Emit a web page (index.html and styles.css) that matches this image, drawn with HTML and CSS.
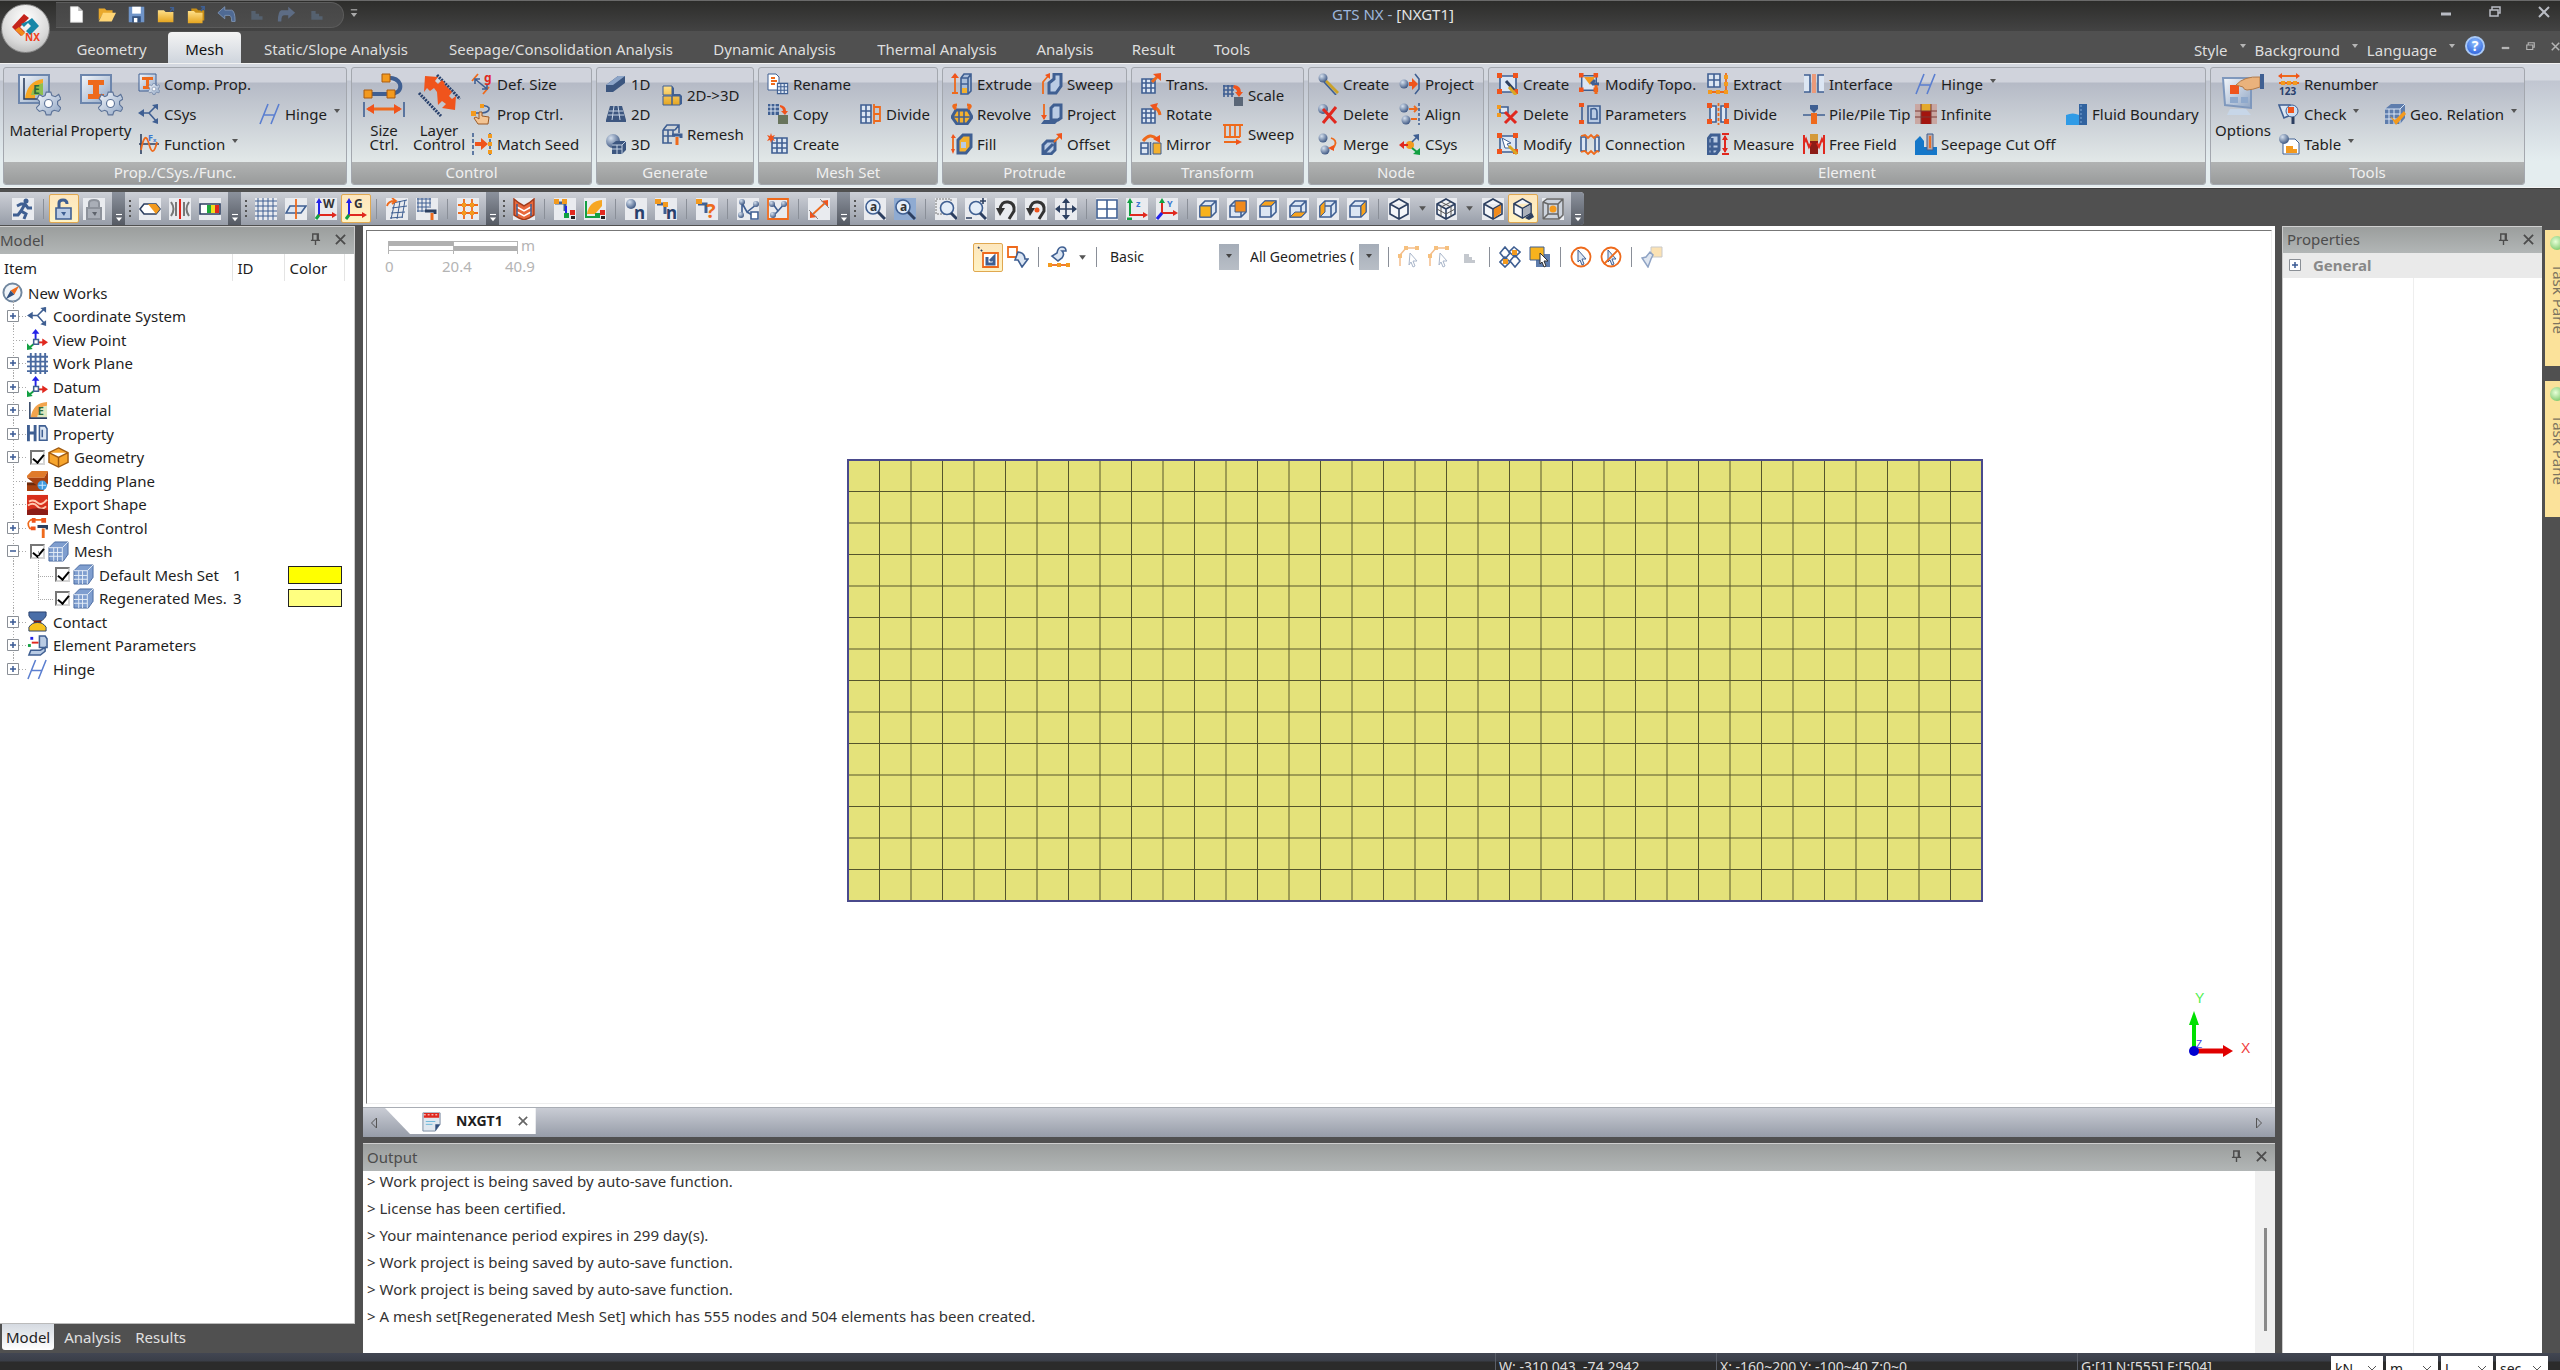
FILE: index.html
```html
<!DOCTYPE html>
<html lang="en">
<head>
<meta charset="utf-8">
<title>GTS NX - [NXGT1]</title>
<link rel="stylesheet" href="styles.css">
</head>
<body>
<svg class="sprite" aria-hidden="true">
<defs>
<linearGradient id="steel" x1="0" y1="0" x2="1" y2="1"><stop offset="0" stop-color="#f4f7fb"/><stop offset="1" stop-color="#8fa5c4"/></linearGradient>
<linearGradient id="amber" x1="0" y1="0" x2="0" y2="1"><stop offset="0" stop-color="#ffe08a"/><stop offset="1" stop-color="#e5a520"/></linearGradient>
<radialGradient id="ball" cx=".35" cy=".3" r=".8"><stop offset="0" stop-color="#d5e0ee"/><stop offset="1" stop-color="#2f4a78"/></radialGradient>
</defs>
<!-- quick access -->
<symbol id="new" viewBox="0 0 22 22"><path fill="#fff" stroke="#ccc" d="M4 2h9l5 5v13H4z"/><path fill="#bbb" d="M13 2v5h5z"/></symbol>
<symbol id="open" viewBox="0 0 22 22"><path fill="#e9a92c" d="M2 4h7l2 2h7v4H7L2 18z"/><path fill="#ffd676" d="M7 9h15l-5 10H2z"/></symbol>
<symbol id="save" viewBox="0 0 22 22"><path fill="#6f94c8" d="M2 2h18v18H2z"/><path fill="#fff" d="M6 2h10v8H6z"/><path fill="#34527e" d="M6 13h10v7H6z"/><path fill="#fff" d="M8 15h4v5H8z"/></symbol>
<symbol id="folder" viewBox="0 0 22 22"><path fill="url(#amber)" d="M1 6h7l2 2h9v12H1z"/><path class="s" d="M15 8l4-5m-4 0h4v4"/></symbol>
<symbol id="folders" viewBox="0 0 22 22"><path fill="#c98f17" d="M5 4h6l2 2h7v12H5z"/><path fill="url(#amber)" d="M1 7h7l2 2h8v12H1z"/><path class="s" d="M16 7l4-5m-4 0h4v4"/></symbol>
<symbol id="undo" viewBox="0 0 22 22"><path fill="#4f6a94" stroke="#8097b8" d="M1 9l8-7v4h8q4 1 4 13h-4q0-7-3-7H9v4z"/></symbol>
<symbol id="redo" viewBox="0 0 22 22"><path fill="#5d6c84" d="M21 9l-8-7v4H5q-4 1-4 13h4q0-7 3-7h5v4z"/></symbol>
<symbol id="dim" viewBox="0 0 22 22"><path fill="#55616f" d="M5 7h5v3h4v3h4v4H5z"/></symbol>
<!-- large ribbon art -->
<symbol id="gear" viewBox="0 0 22 22"><path fill="url(#steel)" stroke="#5d7398" d="M9 1h4l1 3 3 1 3-2 2 4-3 2v3l3 3-2 3-4-1-2 1-1 3h-4l-1-3-2-1-3 1-3-3 3-3V9L1 7l2-4 3 2 2-1z"/><circle cx="11" cy="11" r="3.500" fill="#fff" stroke="#5d7398"/></symbol>
<symbol id="material" viewBox="0 0 44 44"><path fill="url(#steel)" stroke="#6d86ad" stroke-width="2" d="M2 2h30v28H2z"/><path fill="#f6a623" d="M8 26q2-18 18-20v4q-8 2-8 16z"/><path fill="#8fbf4e" d="M14 22q2-10 12-12v12z"/><path class="k" d="M7 5v21h19"/><text class="gt" x="16" y="21">E</text><use href="#gear" x="19" y="18" width="25" height="25"/></symbol>
<symbol id="property" viewBox="0 0 44 44"><path fill="url(#steel)" stroke="#6d86ad" stroke-width="2" d="M2 2h30v28H2z"/><path fill="#ee6a1c" d="M9 7h16v5h-5v9h5v5H9v-5h5v-9H9z"/><use href="#gear" x="19" y="18" width="25" height="25"/></symbol>
<symbol id="sizectrl" viewBox="0 0 44 44"><path class="s w4" d="M6 21h24q10-2 8-10-3-7-14-6"/><path class="fo" stroke="#a85a10" d="M2 17h8v8H2zM25 17h8v8h-8zM20 1h8v8h-8z"/><path class="s" d="M2 29v15M42 29v15"/><path class="o w3" d="M6 36h32"/><path class="fr" d="M4 36l8-5v10zM40 36l-8-5v10z"/></symbol>
<symbol id="layer" viewBox="0 0 44 44"><path stroke="#28406c" stroke-width="3" stroke-dasharray="2 1" d="M2 20l22 23M20 2l23 24"/><path class="fr" d="M8 3l13 1-3 4 3 3 4-4 0 0 3 3-1 1 8 8-3 4 3 3 4-3-1 14-13-2 4-4-4-3-4 4-1-13-3-4-4 3-3-3-3 4z"/></symbol>
<symbol id="options" viewBox="0 0 44 44"><path fill="url(#steel)" stroke="#7f98bd" stroke-width="2" d="M2 5h28v30L4 32z"/><path fill="#c7d6e8" d="M9 36h16l5 6H6z"/><path class="fr" d="M9 12h9v9H9z"/><path fill="#8fa9cc" d="M9 24h8v6H9zM20 24h7v6h-7z"/><path fill="#eab27c" stroke="#b37a48" d="M15 12q8-9 24-8v10q-8 3-13 3-3 0-4-3z"/><path class="fs" d="M39 1h4v15h-4z"/></symbol>
<!-- small ribbon art -->
<symbol id="compprop" viewBox="0 0 22 22"><path fill="url(#steel)" class="s1" d="M1 1h17v17H1z"/><path fill="#ee6a1c" d="M4 4h11v3h-4v6h3v3H5v-3h3V7H4z"/><use href="#gear" x="10" y="10" width="12" height="12"/></symbol>
<symbol id="csys" viewBox="0 0 22 22"><path class="s" d="M2 10h9l8-8M11 10l8 9"/><path class="fs" d="M0 10l6-4v8zM20 1v6l-6-5zM20 21v-6l-6 4z"/></symbol>
<symbol id="func" viewBox="0 0 22 22"><path class="k" d="M3 1v20M1 11h20"/><path class="o" d="M3 17Q7-4 11 11t8-2"/><text class="bt" x="10" y="8">Fₓ</text></symbol>
<symbol id="hinge" viewBox="0 0 22 22"><path stroke="#5b7fd0" stroke-width="1.600" fill="none" d="M1 21L9 1M12 21l8-20M5 12h11"/></symbol>
<symbol id="defsize" viewBox="0 0 22 22"><path class="o" d="M1 8l6-7M12 21l6-7"/><path class="s" d="M4 6l12 10M4 11V6h5M11 16h5v-5"/><text class="rt" x="13" y="9">g</text></symbol>
<symbol id="propctrl" viewBox="0 0 22 22"><path class="s" d="M3 10h8q8-1 7-5-2-3-7-2"/><path class="fo" d="M0 8h5v5H0zM9 1h4v4H9z"/><path fill="#f3c493" stroke="#9a5a26" d="M7 21l-4-6 2-1 3 2V9h3v4l7 1-1 7z"/></symbol>
<symbol id="seed" viewBox="0 0 22 22"><path class="s" stroke-dasharray="4 2" d="M2 0v22M19 0v22"/><path class="fr" d="M4 9h6V5l7 6-7 6v-4H4z"/><path class="fo" d="M17 1h4v4h-4zM17 9h4v4h-4zM17 17h4v4h-4z"/></symbol>
<symbol id="d1" viewBox="0 0 22 22"><path fill="#3c567f" d="M1 12L13 3h7v7L8 19H1z"/><path fill="#8da5c8" d="M1 12L13 3h7L8 12z"/></symbol>
<symbol id="d2" viewBox="0 0 22 22"><path fill="#3c567f" d="M5 3h12l4 14v2H1v-2z"/><path stroke="#c5d2e4" fill="none" d="M4 8h14M3 12h16M9 3L7 17M13 3l2 14"/></symbol>
<symbol id="d3" viewBox="0 0 22 22"><circle cx="8" cy="8" r="7" fill="url(#ball)"/><path fill="#3c567f" d="M7 11l4-3h10v9l-4 4H7z"/><path stroke="#c5d2e4" fill="none" d="M7 12h10v9M17 12l4-4M12 12v9M7 16h10"/></symbol>
<symbol id="to3d" viewBox="0 0 22 22"><path class="s1" fill="url(#amber)" d="M2 2h9v9H2zM2 12h9v9H2zM11 12h8v9h-8z"/><path class="fs" d="M11 2l2 2v6h6l2 2v8l-2 1v-9h-8z"/></symbol>
<symbol id="remesh" viewBox="0 0 22 22"><path class="s" d="M2 7l4-5h12v8M2 7h12M2 7v13h9M7 7v13M2 13h12M12 7v6M14 7l4-5"/><path class="s w3" d="M11 12h9v3"/><path class="o w3" d="M16 14v8"/></symbol>
<symbol id="grid" viewBox="0 0 22 22"><path class="s" fill="#dce6f3" d="M5 5h15v15H5zM10 5v15M15 5v15M5 10h15M5 15h15"/></symbol>
<symbol id="rename" viewBox="0 0 22 22"><path fill="#fff" class="s1" d="M1 1h8l3 3v13H1z"/><path class="o" d="M4 5h4M4 8h6M4 11h4"/><use href="#grid" x="7" y="7" width="15" height="15"/></symbol>
<symbol id="copy" viewBox="0 0 22 22"><path class="fs" d="M1 1h11v11H1z"/><path stroke="#dbe4f0" d="M4 1v11M8 1v11M1 4h11M1 8h11"/><path fill="#68745c" d="M11 12h10v9H11z"/><path class="fr" d="M13 2q6 1 6 6h2l-3 4-4-4h2q0-3-3-4z"/></symbol>
<symbol id="create" viewBox="0 0 22 22"><use href="#grid" width="22" height="22"/><path class="fr" d="M4 0l1 3 3-1-2 3 2 3-3-1-1 3-1-3-3 1 2-3-2-3 3 1z"/></symbol>
<symbol id="divide" viewBox="0 0 22 22"><path class="s" fill="#dce6f3" d="M1 2h10v18H1zM6 2v18M1 8h10M1 14h10"/><path class="o" d="M14 1v20M14 4h6v14h-6M14 11h6"/></symbol>
<symbol id="cube" viewBox="0 0 22 22"><path class="s" fill="#dce6f3" d="M3 8l5-5h11v11l-5 5H3zM3 8h11v11M14 8l5-5"/></symbol>
<symbol id="extrude" viewBox="0 0 22 22"><path class="o" d="M4 2v18M1 20h6"/><path class="fr" d="M4 0l4 5H0z"/><path class="s" fill="#a9bdd9" d="M10 5l3-4h7v17l-3 3h-7zM10 5h7v16M17 5l3-4M10 11h7"/><path fill="#f3b02e" d="M11 15h5v5h-5z"/></symbol>
<symbol id="revolve" viewBox="0 0 22 22"><path class="s w3" fill="#f3b02e" d="M5 7h12l4 7-5 7H6l-5-7z"/><path class="s" d="M8 7v14M13 7v14M2 14h18"/><path class="o w3" d="M5 6q-5-4 1-4M17 6q5-4-1-4"/></symbol>
<symbol id="fill" viewBox="0 0 22 22"><path class="o" d="M2 3v15"/><path class="fr" d="M2 1l3 4H0zM2 21l-2-5h4z"/><path class="s w3" fill="#f3b02e" d="M7 7l5-5h8v12l-5 6H7z"/><path class="fl" d="M10 9h5v6h-5z"/></symbol>
<symbol id="sweepp" viewBox="0 0 22 22"><path class="s w3" fill="#b9cbe4" d="M8 10l5-4V1h7v12l-5 7H8z"/><path class="o" d="M2 21V9l6-7"/><path class="fr" d="M9 0v6L4 2z"/></symbol>
<symbol id="projectp" viewBox="0 0 22 22"><path class="o" d="M3 1v15"/><path class="fr" d="M3 17l-3-5h6z"/><path class="s w3" fill="#b9cbe4" d="M10 5l3-3h7v13l-3 2h-7z"/><path class="fs" d="M3 17h15l-4 4H0z"/></symbol>
<symbol id="offset" viewBox="0 0 22 22"><path class="s w3" fill="#b9cbe4" d="M2 12l4-4h8v9l-4 4H2zM3 20l9-9"/><path class="o" d="M13 9l6-6"/><path class="fr" d="M21 0v7l-6-6z"/></symbol>
<symbol id="trans" viewBox="0 0 22 22"><path class="s" fill="#dce6f3" d="M2 6h13v14H2zM6 6v14M11 6v14M2 10h13M2 15h13"/><path class="o w3" d="M12 9l7-7"/><path class="fr" d="M21 0v8l-8-7z"/></symbol>
<symbol id="rotate" viewBox="0 0 22 22"><path class="s" fill="#dce6f3" d="M2 6h13v14H2zM6 6v14M11 6v14M2 10h13M2 15h13"/><path class="o w3" d="M14 4q5 2 6 8"/><path class="fr" d="M10 2l8-2-3 8z"/></symbol>
<symbol id="mirror" viewBox="0 0 22 22"><path class="s" fill="#dce6f3" d="M1 10h7v11H1zM1 15h7"/><path class="s1" fill="#f3b02e" d="M13 10h8v11h-8z"/><path class="s" d="M10.500 9v13"/><path class="o w3" d="M3 8q7-9 14-2"/><path class="fr" d="M20 2v8l-7-4z"/></symbol>
<symbol id="scale" viewBox="0 0 22 22"><path class="s" d="M1 2h11M1 6h11M1 10h11M2 1v12M6 1v12M10 1v12"/><path fill="#5a6677" d="M12 13h9v9h-9z"/><path class="fr" d="M12 1q7 1 7 7h2l-4 5-4-5h2q0-3-4-4z"/></symbol>
<symbol id="sweept" viewBox="0 0 22 22"><path class="o" d="M1 2h20M3 2v12M8 2v12M13 2v12M18 2v12M2 14h16M2 19h15"/><path class="fr" d="M20 19l-6-3v6z"/></symbol>
<symbol id="nodec" viewBox="0 0 22 22"><circle cx="6" cy="5" r="4.500" fill="url(#ball)"/><path stroke="#caa22a" stroke-width="3" d="M9 8l12 12"/><path class="s" d="M7 9l12 13"/></symbol>
<symbol id="noded" viewBox="0 0 22 22"><circle cx="6" cy="6" r="5" fill="url(#ball)"/><path class="r w3" d="M6 6l13 14M19 4L6 20"/></symbol>
<symbol id="nodem" viewBox="0 0 22 22"><circle cx="6" cy="5" r="4.500" fill="url(#ball)"/><circle cx="8" cy="17" r="4.500" fill="url(#ball)"/><path class="o" d="M14 5q6 2 4 7t-4 3"/><path class="fr" d="M11 15l6-3v6z"/></symbol>
<symbol id="nodep" viewBox="0 0 22 22"><circle cx="5" cy="11" r="4.500" fill="url(#ball)"/><path class="fr" d="M10 9h3V5l6 6-6 6v-4h-3z"/><path class="s" d="M16 1l4 5v10l-4 5"/></symbol>
<symbol id="nodea" viewBox="0 0 22 22"><circle cx="5" cy="5" r="4.500" fill="url(#ball)"/><circle cx="7" cy="17" r="4.500" fill="url(#ball)"/><path class="o" d="M10 6h8M12 16h6M15 3l3 3-3 3"/><path class="s" stroke-dasharray="3 2" d="M20 0v22"/></symbol>
<symbol id="nodes" viewBox="0 0 22 22"><circle cx="11" cy="12" r="4" class="fo"/><path class="r" d="M9 12H3"/><path fill="#e0281e" d="M0 12l5-4v8z"/><path class="s" d="M13 9l5-5"/><path class="fs" d="M20 1v7l-6-6z"/><path class="g" d="M13 15l5 4"/><path fill="#12a042" d="M21 22v-7l-7 6z"/></symbol>
<symbol id="quad" viewBox="0 0 22 22"><path class="s" fill="#dce6f3" d="M3 3h16v16H3z"/><path class="fr" d="M0 0h5v5H0zM16 0h5v5h-5zM0 16h5v5H0zM16 16h5v5h-5z"/></symbol>
<symbol id="ecreate" viewBox="0 0 22 22"><use href="#quad" width="22" height="22"/><path class="k w3" d="M9 8l8 9"/><path stroke="#d8a825" stroke-width="3" d="M12 14l7 8"/></symbol>
<symbol id="edelete" viewBox="0 0 22 22"><path class="s" fill="#dce6f3" d="M3 4h8v6H3z"/><path class="fo" d="M0 2h4v4H0zM0 10h4v4H0z"/><path class="r w3" d="M8 9l11 11M20 8L8 20"/></symbol>
<symbol id="emodify" viewBox="0 0 22 22"><use href="#quad" width="22" height="22"/><path fill="#fff" class="s1" d="M5 5l9 5-4 1 3 4-5 0z"/><path stroke="#d8a825" stroke-width="3" d="M12 13l8 8"/></symbol>
<symbol id="topo" viewBox="0 0 22 22"><use href="#quad" width="20" height="20"/><path class="fo" d="M5 4h11l-5 8z"/><path class="s w3" d="M12 11l4-4M13 11h7"/><path class="o w3" d="M17 12v9"/></symbol>
<symbol id="param" viewBox="0 0 22 22"><path class="s" d="M3 2v17"/><path class="fr" d="M0 0h5v4H0zM0 17h5v4H0z"/><path class="s" fill="#b9cbe4" d="M9 3h12v17H9z"/><path class="s" d="M12 6q6-2 6 3v7h-6z"/></symbol>
<symbol id="conn" viewBox="0 0 22 22"><path class="s" fill="#dce6f3" d="M2 4h5v14H2zM16 4h4v14h-4z"/><path class="o" d="M2 3l4-1 3 3 3-3 3 3 3-3 2 1M2 19l4-1 3 3 3-3 3 3 3-3 2 1"/></symbol>
<symbol id="extract" viewBox="0 0 22 22"><path class="s" fill="#dce6f3" d="M1 1h12v13H1zM7 1v13M1 7h12"/><path class="o" d="M19 0v20M1 19h18"/><path class="fo" d="M17 2h4v4h-4zM17 9h4v4h-4zM1 17h4v4H1zM9 17h4v4H9zM17 17h4v4h-4z"/></symbol>
<symbol id="edivide" viewBox="0 0 22 22"><path class="s" fill="#dce6f3" d="M3 3h6v16H3zM14 3h5v16h-5z"/><path class="fr" d="M0 0h5v5H0zM17 0h5v5h-5zM0 16h5v5H0zM17 16h5v5h-5z"/><path class="o" stroke-dasharray="3 2" d="M11.500 0v22"/></symbol>
<symbol id="measure" viewBox="0 0 22 22"><path class="s w3" fill="#b9cbe4" d="M1 6l3-4h8v15l-3 4H1zM5 5v15M1 11h10M1 16h10"/><path class="r" d="M18 3v16M15 1h7M15 21h7"/><path fill="#e0281e" d="M18 2l3 5h-6zM18 20l3-5h-6z"/></symbol>
<symbol id="iface" viewBox="0 0 22 22"><path class="s" fill="#dce6f3" d="M1 2h6v17H1M21 2h-6v17h6"/><path fill="#eb9a7a" d="M9 1h4v19H9z"/></symbol>
<symbol id="pile" viewBox="0 0 22 22"><path class="fs" d="M7 2h8v4l-4 4-4-4z"/><path class="s" d="M0 12h22"/><path fill="#ee6a1c" d="M8 10h6v11H8z"/></symbol>
<symbol id="free" viewBox="0 0 22 22"><path fill="#8c1c16" d="M7 8h8v13H7z"/><path fill="#d49a3a" d="M7 1h8v7H7z"/><path class="r" d="M1 2v19M21 2v19M1 10l2-4 3 8 2-4M21 10l-2-4-3 8-2-4"/></symbol>
<symbol id="infinite" viewBox="0 0 22 22"><path fill="#c9a7a2" d="M0 1h22v20H0z"/><path fill="#e3a92d" d="M6 1h10v7H6z"/><path fill="#a3150f" d="M6 8h10v13H6z"/><path stroke="#7a3b36" d="M0 8h22M0 14h22M6 1v20M16 1v20"/></symbol>
<symbol id="seepage" viewBox="0 0 22 22"><path fill="#1477c9" d="M0 8l5-5 4 5v14H0zM9 14h13v8H9z"/><path class="s1" fill="#b9a9a8" d="M12 1h6v16h-6z"/><path class="o" d="M15 3v12"/></symbol>
<symbol id="fluid" viewBox="0 0 22 22"><path fill="#2f9be6" d="M0 12q7-3 13 0v10H0z"/><path fill="#31639f" d="M13 1h8v21h-8z"/><path stroke="#7fa8d4" stroke-dasharray="2 2" d="M15 2v19"/></symbol>
<symbol id="renum" viewBox="0 0 22 22"><path class="o" d="M1 3h20M1 10h20"/><path class="fr" d="M0 3l4-3v6zM22 3l-4-3v6z"/><path class="fo" d="M3 8h4v4H3zM9 8h4v4H9zM15 8h4v4h-4z"/><text class="nt" x="1" y="22">123</text></symbol>
<symbol id="check" viewBox="0 0 22 22"><path class="s" fill="#dce6f3" d="M1 2h11l3 9-9 4z"/><circle cx="14" cy="8" r="6" fill="#cfe0f3" class="s1"/><path class="fr" d="M10 4h6v6h-6z"/><path class="k w3" d="M15 14v7"/></symbol>
<symbol id="table" viewBox="0 0 22 22"><path fill="#fff" class="s1" d="M5 6h12l4 4v11H5z"/><circle cx="6" cy="6" r="5" fill="url(#ball)"/><path class="fo" d="M8 13h7v3h4v4H8z"/></symbol>
<symbol id="georel" viewBox="0 0 22 22"><path fill="#5e7dad" d="M1 6l6-5h14v14l-5 6H1z"/><path stroke="#dbe6f4" fill="none" d="M1 6h15v15M16 6l5-5M5 6v15M10 6v15M1 11h15M1 16h15"/><path class="fo" d="M6 13l5 4L20 8l2 3-10 11z"/></symbol>
<!-- tool bars -->
<symbol id="run" viewBox="0 0 22 22"><circle cx="14" cy="3" r="2.500" class="fs"/><path class="s w3" d="M13 6l-4 7 5 3-2 5M9 13l-3 4H1M5 8l4-2h4l3 4h4"/></symbol>
<symbol id="lockopen" viewBox="0 0 22 22"><path class="s w3" d="M6 10V5q0-3 4-3t4 4"/><path class="s" fill="#b9cbe4" d="M3 10h15v11H3z"/><path class="fs" d="M8 14h5l-2 4z"/></symbol>
<symbol id="lock" viewBox="0 0 22 22"><path stroke="#8d929b" stroke-width="2" fill="#a9aeb7" d="M6 10V5q0-3 5-3t5 3v5M4 10h14v11H4z"/><path fill="#5e636c" d="M9 14h5l-2 4z"/></symbol>
<symbol id="clip" viewBox="0 0 22 22"><path class="k" fill="#fff" d="M5 6h12l4 5-4 5H5l-4-5z"/><path class="fo" d="M9 6h8l4 5-4 5z"/></symbol>
<symbol id="sym" viewBox="0 0 22 22"><path stroke="#777" fill="none" stroke-width="2" d="M2 4q5 7 0 14M7 4v14M20 4q-5 7 0 14M15 4v14"/><path class="r" d="M11 1v20"/></symbol>
<symbol id="contour" viewBox="0 0 22 22"><path class="k" fill="#fff" d="M1 6h20v10H1z"/><path fill="#1ca83c" d="M8 7h4v8H8z"/><path fill="#f0dc1e" d="M12 7h4v8h-4z"/><path fill="#e0281e" d="M16 7h4v8h-4z"/></symbol>
<symbol id="gridp" viewBox="0 0 22 22"><path class="s1" d="M0 3h22M0 8h22M0 13h22M0 18h22M3 0v22M8 0v22M13 0v22M18 0v22"/></symbol>
<symbol id="wplane" viewBox="0 0 22 22"><path class="s" fill="#dce6f3" d="M5 8h16l-5 7H1z"/><path class="o" d="M11 1v20"/></symbol>
<symbol id="axw" viewBox="0 0 22 22"><path class="u" d="M4 18V3"/><path fill="#2222e8" d="M4 0l3 5H1z"/><path class="r" d="M4 17h14"/><path fill="#e0281e" d="M22 17l-5-3v6z"/><path class="g w3" d="M4 17l-3 4"/><text class="xt" x="8" y="10">W</text></symbol>
<symbol id="axg" viewBox="0 0 22 22"><path class="u" d="M4 18V3"/><path fill="#2222e8" d="M4 0l3 5H1z"/><path class="r" d="M4 17h14"/><path fill="#e0281e" d="M22 17l-5-3v6z"/><path class="g w3" d="M4 17l-3 4"/><text class="xt" x="9" y="10">G</text></symbol>
<symbol id="axz" viewBox="0 0 22 22"><path class="g" d="M4 18V3"/><path fill="#12a042" d="M4 0l3 5H1z"/><path class="r" d="M4 17h14"/><path fill="#e0281e" d="M22 17l-5-3v6z"/><path class="g w3" d="M1 21h5"/><text class="bt" x="10" y="9">z</text></symbol>
<symbol id="axy" viewBox="0 0 22 22"><path class="r" d="M6 15V3M6 15h13"/><path fill="#12a042" d="M6 0l3 5H3z"/><path fill="#e0281e" d="M22 15l-5-3v6z"/><path class="u w3" d="M6 15l-5 6"/><text class="bt" x="11" y="9">Y</text></symbol>
<symbol id="gmove" viewBox="0 0 22 22"><path class="s1" d="M7 5l14-3M6 10l15-2M5 15l14-1M4 20l13-1M9 3L5 21M14 3l-3 18M19 2l-3 18"/><path class="o" d="M1 8q1-5 8-5M6 0l4 3-4 3"/></symbol>
<symbol id="gedit" viewBox="0 0 22 22"><path class="s1" d="M1 1h14M1 5h14M1 9h12M1 13h8M2 0v14M6 0v14M10 0v12M14 0v10"/><path class="k w3" d="M9 13h10v3"/><path class="o w3" d="M16 15v7"/></symbol>
<symbol id="hash" viewBox="0 0 22 22"><path class="o" d="M1 7h20M1 15h20M7 1v20M15 1v20"/><path class="fo" d="M5 5h4v4H5zM13 5h4v4h-4zM5 13h4v4H5zM13 13h4v4h-4z"/></symbol>
<symbol id="brick" viewBox="0 0 22 22"><path fill="#e8683c" stroke="#a33a1a" stroke-width="1.500" d="M1 1l5 4 5 3 5-3 5-4v16l-5 3-5 2-5-2-5-3z"/><path stroke="#fff" stroke-width="1.500" fill="none" d="M4 9l7 4 7-4M4 14l7 4 7-4"/><path stroke="#3f5f92" stroke-width="1.500" fill="none" d="M4 6v12M18 6v12"/></symbol>
<symbol id="info1" viewBox="0 0 22 22"><path class="s w3" d="M1 5h10v8"/><path class="fo" d="M0 1h5v5H0zM8 1h5v5H8z"/><path class="u" d="M12 8v7"/><path fill="#12a042" d="M10 15h5v5h-5z"/><path fill="#e0281e" d="M16 12h5v5h-5z"/><path fill="#222" d="M17 18h4v3h-4z"/></symbol>
<symbol id="info2" viewBox="0 0 22 22"><path fill="#f6a623" d="M3 16Q5 3 18 2v6l-7 8z"/><path class="g" d="M2 20V3M2 19h10"/><path fill="#12a042" d="M11 15h5v5h-5z"/><path fill="#e0281e" d="M16 12h5v5h-5z"/><path fill="#222" d="M17 18h4v3h-4z"/></symbol>
<symbol id="non" viewBox="0 0 22 22"><circle cx="6" cy="6" r="5" fill="url(#ball)"/><text class="lt" x="9" y="21">n</text></symbol>
<symbol id="eln" viewBox="0 0 22 22"><path class="s w3" d="M2 6h8v10"/><path class="fo" d="M0 1h6v5H0zM8 4h5v5H8z"/><text class="lt" x="11" y="21">n</text></symbol>
<symbol id="ask" viewBox="0 0 22 22"><path class="s w3" d="M2 6h8v9"/><path class="fo" d="M0 1h6v5H0z"/><text class="qt" x="10" y="20">?</text></symbol>
<symbol id="net" viewBox="0 0 22 22"><path class="s" d="M5 5l5 9 10-8M10 14l7 4M5 5v13"/><circle cx="5" cy="4" r="3" fill="url(#ball)"/><circle cx="4" cy="17" r="3" fill="url(#ball)"/><circle cx="19" cy="6" r="3" fill="url(#ball)"/><path class="s" fill="#fff" d="M14 14h7v7h-7z"/></symbol>
<symbol id="netbox" viewBox="0 0 22 22"><path class="o" d="M1 1h20v20H1z"/><path class="s" d="M6 6l5 7 7-8M11 13l-5 5"/><circle cx="5" cy="6" r="3" fill="url(#ball)"/><circle cx="6" cy="17" r="3" fill="url(#ball)"/><circle cx="17" cy="6" r="3" fill="url(#ball)"/></symbol>
<symbol id="dist" viewBox="0 0 22 22"><path class="o" d="M4 17L18 4"/><path class="fr" d="M20 2v7l-7-6zM2 20v-7l7 6z"/><path stroke="#888" d="M1 12l9 9M12 1l9 9"/></symbol>
<symbol id="zoom" viewBox="0 0 22 22"><circle cx="9" cy="9" r="7" fill="#e4edf8" class="s"/><path class="k w3" d="M14 14l7 7"/><text class="xt" x="6" y="13">a</text></symbol>
<symbol id="zoomwin" viewBox="0 0 22 22"><path stroke="#777" fill="none" stroke-dasharray="2 1" d="M1 1h15v15H1z"/><circle cx="12" cy="10" r="6.500" fill="#e4edf8" class="s"/><path class="k w3" d="M16 15l6 6"/></symbol>
<symbol id="zoomdyn" viewBox="0 0 22 22"><circle cx="11" cy="10" r="6.500" fill="#e4edf8" class="s"/><path class="k w3" d="M15 15l6 6"/><path class="k" d="M18 0v6M15 3h6M1 20h6"/></symbol>
<symbol id="rot" viewBox="0 0 22 22"><path stroke="#333" stroke-width="3" fill="none" d="M5 12q1-9 8-8t6 9l-5 8"/><path fill="#333" d="M5 18l-4-8h9z"/></symbol>
<symbol id="rotc" viewBox="0 0 22 22"><use href="#rot" width="22" height="22"/><circle cx="12" cy="12" r="2.500" class="fr"/></symbol>
<symbol id="pan" viewBox="0 0 22 22"><path class="k" d="M11 3v16M3 11h16"/><path class="fk" d="M11 0l4 5H7zM11 22l4-5H7zM0 11l5-4v8zM22 11l-5-4v8z"/></symbol>
<symbol id="four" viewBox="0 0 22 22"><path class="s" fill="#fff" d="M1 2h20v18H1zM11 2v18M1 11h20"/></symbol>
<symbol id="cfront" viewBox="0 0 22 22"><use href="#cube" width="22" height="22"/><path class="s1" fill="#f7b21c" d="M3 8h11v11H3z"/></symbol>
<symbol id="cback" viewBox="0 0 22 22"><use href="#cube" width="22" height="22"/><path class="s1" fill="#f08a1c" d="M8 3h11v11H8z"/></symbol>
<symbol id="ctop" viewBox="0 0 22 22"><use href="#cube" width="22" height="22"/><path class="s1" fill="#f7a21c" d="M3 8l5-5h11l-5 5z"/></symbol>
<symbol id="cbot" viewBox="0 0 22 22"><use href="#cube" width="22" height="22"/><path class="s1" fill="#f7a21c" d="M3 19l5-5h11l-5 5z"/></symbol>
<symbol id="cleft" viewBox="0 0 22 22"><use href="#cube" width="22" height="22"/><path class="s1" fill="#f7a21c" d="M3 8l5-5v11l-5 5z"/></symbol>
<symbol id="cright" viewBox="0 0 22 22"><use href="#cube" width="22" height="22"/><path class="s1" fill="#f7a21c" d="M14 8l5-5v11l-5 5z"/></symbol>
<symbol id="iso" viewBox="0 0 22 22"><path class="k" fill="#f4f6f9" d="M11 1l9 5v10l-9 5-9-5V6zM2 6l9 5 9-5M11 11v10"/></symbol>
<symbol id="isomesh" viewBox="0 0 22 22"><use href="#iso" width="22" height="22"/><path stroke="#555" fill="none" d="M2 11l9 5 9-5M6 4l10 5v10M16 4L6 9v10"/></symbol>
<symbol id="isocut" viewBox="0 0 22 22"><use href="#iso" width="22" height="22"/><path fill="#f08a1c" d="M12 11l7-4v8l-7 5z"/></symbol>
<symbol id="isoshade" viewBox="0 0 22 22"><path class="fk" d="M13 20l7-5 2 4-5 3z"/><use href="#iso" width="21" height="21"/><path fill="#aab0ba" d="M11 11l7-4v8l-7 4z"/></symbol>
<symbol id="persp" viewBox="0 0 22 22"><path stroke="#666" stroke-width="1.500" fill="#cdd3dc" d="M1 4l4-3h16v16l-4 4H1zM6 6h10v10H6zM1 4l5 2M21 1l-5 5M1 21l5-5M17 21l-1-5"/><circle cx="11" cy="11" r="3.500" class="fo"/></symbol>
<symbol id="pickbox" viewBox="0 0 22 22"><path class="o" fill="#fff" d="M6 7h15v14H6z"/><path class="k" stroke-dasharray="2 2" d="M1 1l5 5"/><path class="s w3" d="M10 11v7h7v-7l-4 4"/></symbol>
<symbol id="pickpoly" viewBox="0 0 22 22"><path class="o" d="M1 1h9v10H1z"/><path class="s" fill="#dce6f3" d="M8 14l3-8q7 1 7 7h3l-6 8-4-7z"/></symbol>
<symbol id="pickhex" viewBox="0 0 22 22"><path class="s" fill="#dce6f3" d="M9 7q1-6 5-6t4 4h-4q3 3 0 7l-4 3-6-5z"/><path class="o" d="M1 19h20"/><path class="fo" d="M0 17h4v4H0zM9 17h4v4H9zM18 17h4v4h-4z"/></symbol>
<symbol id="pickpath" viewBox="0 0 22 22"><path stroke="#f3bd8c" stroke-width="1.500" fill="none" d="M2 20V9l6-7h12"/><path fill="#f6c07e" d="M0 8h4v4H0zM6 0h4v4H6zM17 0h4v4h-4z"/><path fill="#fff" stroke="#a9b6ca" d="M12 7l7 8h-4l2 5-2 1-2-5-2 3z"/></symbol>
<symbol id="pickdim" viewBox="0 0 22 22"><path fill="#c4c8ce" d="M6 8h5v3h3v3h3v3H6z"/></symbol>
<symbol id="isect" viewBox="0 0 22 22"><path class="s" fill="#fff" d="M6 1l5 6-5 6-5-6zM16 9l5 6-5 6-5-6z"/><path class="s" d="M15 1l6 5-5 5-6-5zM6 11l5 5-5 5-5-5z"/><path class="fo" d="M13 4h5v5h-5zM4 13h5v5H4z"/></symbol>
<symbol id="front" viewBox="0 0 22 22"><path fill="#5e7dad" d="M7 8h14v13H7z"/><path class="s1" fill="#f7b21c" d="M1 1h14v13H1z"/><path fill="#fff" stroke="#333" d="M11 7l8 8h-4l2 5-2 1-2-5-2 2z"/></symbol>
<symbol id="pickc" viewBox="0 0 22 22"><circle cx="11" cy="11" r="9.500" fill="#fff" class="o"/><path fill="#dce6f3" class="s1" d="M8 4l8 9h-4l2 5-2 1-2-5-2 2z"/></symbol>
<symbol id="nopick" viewBox="0 0 22 22"><use href="#pickc" width="22" height="22"/><path class="o" d="M4 18L18 4"/></symbol>
<symbol id="paint" viewBox="0 0 22 22"><path fill="#fbe2b4" stroke="#c9c9c9" d="M10 1h11v10H10z"/><path fill="#dfe6f0" stroke="#8fa3c4" stroke-width="1.500" d="M1 12l4-1 4-5 3 3-2 4-3 8z"/></symbol>
<!-- tree -->
<symbol id="compass" viewBox="0 0 22 22"><circle cx="11" cy="11" r="9.500" fill="#eef3f8" stroke="#71879f" stroke-width="2"/><path fill="#ee6a1c" d="M18 4l-5 9-4-4z"/><path fill="#31507e" d="M4 18l5-9 4 4z"/></symbol>
<symbol id="tgrid" viewBox="0 0 22 22"><path fill="none" stroke="#4a6aa0" stroke-width="2" d="M0 4h22M0 9h22M0 14h22M0 19h22M4 0v22M9 0v22M14 0v22M19 0v22"/></symbol>
<symbol id="triad" viewBox="0 0 22 22"><path class="u" d="M9 13V4"/><path fill="#2222e8" d="M9 0l4 5H5z"/><path class="r" d="M9 14h9"/><path fill="#e0281e" d="M22 14l-6-4v8z"/><path class="g" d="M8 15l-5 4"/><path fill="#12a042" d="M0 22v-7l6 6z"/><path class="s" fill="#fff" d="M7 11h5v5H7z"/></symbol>
<symbol id="tmat" viewBox="0 0 22 22"><path fill="#f2a44c" d="M4 18Q6 3 21 2v4q-9 1-10 12z"/><path fill="#dfe8c0" d="M11 18Q12 7 21 6v12z"/><path class="k" d="M3 2v17h18"/><text class="gt" x="11" y="16">E</text></symbol>
<symbol id="tprop" viewBox="0 0 22 22"><path class="fs" d="M0 2h3v7h4V2h3v17H7v-7H3v7H0z"/><path class="s" fill="#dce6f3" d="M13 3h6l2 3v12h-8zM16 7v8"/></symbol>
<symbol id="tgeo" viewBox="0 0 22 22"><path fill="#f7a52c" stroke="#a05a10" stroke-width="1.500" d="M11 1l10 5v10l-10 5-10-5V6zM1 6l10 5 10-5M11 11v10"/></symbol>
<symbol id="bed" viewBox="0 0 22 22"><path fill="#6b2a0c" d="M0 13h17v9H0z"/><path fill="#e07a2a" d="M0 6l5-5h17l-4 7H0z"/><path fill="#a8400f" d="M0 8h18l4-7v13l-5 8H0v-6h10z"/><circle cx="16" cy="16" r="5" fill="#3f9be0"/><path stroke="#cfe8ff" d="M16 12v8M12 16h8"/></symbol>
<symbol id="shape" viewBox="0 0 22 22"><path fill="#d8301c" d="M0 1h22v20H0z"/><path stroke="#ffc9b0" stroke-width="2" fill="none" d="M2 8q5-3 9 1t10-3M1 12q6-4 10 1t9 0"/><path fill="#8c1c16" d="M0 17q10-4 22 0v5H0z"/></symbol>
<symbol id="tctrl" viewBox="0 0 22 22"><path class="o" d="M8 12H3Q-1 6 4 3h14"/><path class="fr" d="M5 1h4v5H5zM15 1h5v5h-5zM4 10h5v4H4z"/><path class="k w3" d="M11 10h10v3"/><path class="o w3" d="M17 12v10"/></symbol>
<symbol id="tmesh" viewBox="0 0 22 22"><path fill="#7f9ecf" stroke="#4a6aa0" d="M1 7l6-6h14v13l-5 7H1z"/><path stroke="#e6eef8" fill="none" d="M1 7h14v14M15 7l6-6M6 7v14M10 7v14M1 12h14M1 16h14"/></symbol>
<symbol id="contact" viewBox="0 0 22 22"><path fill="#4a6ea8" stroke="#28406c" d="M2 1h18v4q-3 6-9 6T2 5z"/><path fill="#7a1d14" d="M7 10h8v3H7z"/><path fill="#f7c21c" stroke="#28406c" d="M2 21v-4q3-5 9-5t9 5v4z"/></symbol>
<symbol id="elpar" viewBox="0 0 22 22"><path class="s" fill="#b9cbe4" d="M13 1h6l2 3v9h-8zM4 16h10l5-3v4l-5 4H2z"/><path class="r" d="M5 8h7"/><path class="u w3" d="M5 2v3"/><path class="g w3" d="M1 11h3"/></symbol>
<symbol id="plus" viewBox="0 0 12 12"><path fill="#fff" stroke="#8a8f96" d="M.5.5h11v11H.5z"/><path stroke="#3a5a94" stroke-width="1.500" d="M3 6h6M6 3v6"/></symbol>
<symbol id="minus" viewBox="0 0 12 12"><path fill="#fff" stroke="#8a8f96" d="M.5.5h11v11H.5z"/><path stroke="#3a5a94" stroke-width="1.500" d="M3 6h6"/></symbol>
<symbol id="tri" viewBox="0 0 8 8"><path fill="currentColor" d="M1 2h6L4 6z"/></symbol>
<symbol id="more" viewBox="0 0 10 12"><path stroke="currentColor" stroke-width="1.500" d="M1 2h8"/><path fill="currentColor" d="M1 6h8l-4 5z"/></symbol>
<symbol id="pin" viewBox="0 0 12 14"><path fill="none" stroke="currentColor" stroke-width="1.500" d="M3 1h6v7H3zM1 8h10M6 8v5M8 1v7"/></symbol>
<symbol id="x" viewBox="0 0 12 12"><path stroke="currentColor" stroke-width="2" d="M1 1l10 10M11 1L1 11"/></symbol>
<symbol id="min" viewBox="0 0 12 12"><path stroke="currentColor" stroke-width="3" d="M1 8h10"/></symbol>
<symbol id="rest" viewBox="0 0 12 12"><path fill="none" stroke="currentColor" stroke-width="1.500" d="M3 4V1h8v6H9M1 4h8v6H1z"/></symbol>
<symbol id="logo" viewBox="0 0 30 30"><path fill="#c4241c" d="M13 1l5 4-9 9 5 5-4 4L1 14z"/><path fill="#1787a8" d="M17 8l4-3 7 8-9 9-4-4 5-5-3-3-4 4-3-3z"/><path fill="#f08a1c" d="M4 17l4-3 6 6-3 3z"/><text class="nx" x="14" y="28">NX</text></symbol>
<symbol id="doc" viewBox="0 0 22 22"><path fill="#dfe7ef" stroke="#7a8aa0" d="M2 2h18v12l-5 7H2z"/><path fill="#e0281e" d="M3 2h16v5H3z"/><path stroke="#fff" stroke-dasharray="2 2" d="M3 4h16"/><path fill="#31507e" d="M15 21v-7h5z"/><path stroke="#6cb7d8" d="M5 11h10M5 14h7"/></symbol>
</svg>

<header class="titlebar">
  <button class="app" aria-label="Application menu"><svg><use href="#logo"/></svg></button>
  <nav class="quick" aria-label="Quick access">
    <button aria-label="New"><svg><use href="#new"/></svg></button>
    <button aria-label="Open"><svg><use href="#open"/></svg></button>
    <button aria-label="Save"><svg><use href="#save"/></svg></button>
    <button aria-label="Import"><svg><use href="#folder"/></svg></button>
    <button aria-label="Export"><svg><use href="#folders"/></svg></button>
    <button aria-label="Undo"><svg><use href="#undo"/></svg></button>
    <button aria-label="Undo list"><svg><use href="#dim"/></svg></button>
    <button aria-label="Redo"><svg><use href="#redo"/></svg></button>
    <button aria-label="Redo list"><svg><use href="#dim"/></svg></button>
  </nav>
  <button class="custom" aria-label="Customize"><svg><use href="#more"/></svg></button>
  <h1 class="title"><span>GTS NX -</span> [NXGT1]</h1>
  <div class="winctl">
    <button aria-label="Minimize"><svg><use href="#min"/></svg></button>
    <button aria-label="Restore"><svg><use href="#rest"/></svg></button>
    <button aria-label="Close"><svg><use href="#x"/></svg></button>
  </div>
</header>

<div class="tabrow">
  <nav class="tabs">
    <button>Geometry</button><button class="on">Mesh</button><button>Static/Slope Analysis</button><button>Seepage/Consolidation Analysis</button><button>Dynamic Analysis</button><button>Thermal Analysis</button><button>Analysis</button><button>Result</button><button>Tools</button>
  </nav>
  <div class="prefs">
    <button>Style<svg><use href="#tri"/></svg></button>
    <button>Background<svg><use href="#tri"/></svg></button>
    <button>Language<svg><use href="#tri"/></svg></button>
    <button class="help" aria-label="Help">?</button>
    <button class="mdi" aria-label="Minimize document"><svg><use href="#min"/></svg></button>
    <button class="mdi" aria-label="Restore document"><svg><use href="#rest"/></svg></button>
    <button class="mdi" aria-label="Close document"><svg><use href="#x"/></svg></button>
  </div>
</div>

<div class="ribbon">
  <section class="group g-prop"><div class="body">
    <button class="big"><svg><use href="#material"/></svg>Material</button>
    <button class="big"><svg><use href="#property"/></svg>Property</button>
    <div class="col">
      <button class="cmd"><svg><use href="#compprop"/></svg>Comp. Prop.</button>
      <button class="cmd"><svg><use href="#csys"/></svg>CSys</button>
      <button class="cmd"><svg><use href="#func"/></svg>Function<svg class="dd"><use href="#tri"/></svg></button>
    </div>
    <div class="col"><button class="cmd"><svg><use href="#hinge"/></svg>Hinge<svg class="dd"><use href="#tri"/></svg></button></div>
  </div><h2>Prop./CSys./Func.</h2></section>

  <section class="group g-control"><div class="body">
    <button class="big"><svg><use href="#sizectrl"/></svg>Size<br>Ctrl.</button>
    <button class="big"><svg><use href="#layer"/></svg>Layer<br>Control</button>
    <div class="col">
      <button class="cmd"><svg><use href="#defsize"/></svg>Def. Size</button>
      <button class="cmd"><svg><use href="#propctrl"/></svg>Prop Ctrl.</button>
      <button class="cmd"><svg><use href="#seed"/></svg>Match Seed</button>
    </div>
  </div><h2>Control</h2></section>

  <section class="group g-generate"><div class="body">
    <div class="col">
      <button class="cmd"><svg><use href="#d1"/></svg>1D</button>
      <button class="cmd"><svg><use href="#d2"/></svg>2D</button>
      <button class="cmd"><svg><use href="#d3"/></svg>3D</button>
    </div>
    <div class="col two">
      <button class="cmd"><svg><use href="#to3d"/></svg>2D-&gt;3D</button>
      <button class="cmd"><svg><use href="#remesh"/></svg>Remesh</button>
    </div>
  </div><h2>Generate</h2></section>

  <section class="group g-meshset"><div class="body">
    <div class="col">
      <button class="cmd"><svg><use href="#rename"/></svg>Rename</button>
      <button class="cmd"><svg><use href="#copy"/></svg>Copy</button>
      <button class="cmd"><svg><use href="#create"/></svg>Create</button>
    </div>
    <div class="col"><button class="cmd"><svg><use href="#divide"/></svg>Divide</button></div>
  </div><h2>Mesh Set</h2></section>

  <section class="group g-protrude"><div class="body">
    <div class="col">
      <button class="cmd"><svg><use href="#extrude"/></svg>Extrude</button>
      <button class="cmd"><svg><use href="#revolve"/></svg>Revolve</button>
      <button class="cmd"><svg><use href="#fill"/></svg>Fill</button>
    </div>
    <div class="col">
      <button class="cmd"><svg><use href="#sweepp"/></svg>Sweep</button>
      <button class="cmd"><svg><use href="#projectp"/></svg>Project</button>
      <button class="cmd"><svg><use href="#offset"/></svg>Offset</button>
    </div>
  </div><h2>Protrude</h2></section>

  <section class="group g-transform"><div class="body">
    <div class="col">
      <button class="cmd"><svg><use href="#trans"/></svg>Trans.</button>
      <button class="cmd"><svg><use href="#rotate"/></svg>Rotate</button>
      <button class="cmd"><svg><use href="#mirror"/></svg>Mirror</button>
    </div>
    <div class="col two">
      <button class="cmd"><svg><use href="#scale"/></svg>Scale</button>
      <button class="cmd"><svg><use href="#sweept"/></svg>Sweep</button>
    </div>
  </div><h2>Transform</h2></section>

  <section class="group g-node"><div class="body">
    <div class="col">
      <button class="cmd"><svg><use href="#nodec"/></svg>Create</button>
      <button class="cmd"><svg><use href="#noded"/></svg>Delete</button>
      <button class="cmd"><svg><use href="#nodem"/></svg>Merge</button>
    </div>
    <div class="col">
      <button class="cmd"><svg><use href="#nodep"/></svg>Project</button>
      <button class="cmd"><svg><use href="#nodea"/></svg>Align</button>
      <button class="cmd"><svg><use href="#nodes"/></svg>CSys</button>
    </div>
  </div><h2>Node</h2></section>

  <section class="group g-element"><div class="body">
    <div class="col">
      <button class="cmd"><svg><use href="#ecreate"/></svg>Create</button>
      <button class="cmd"><svg><use href="#edelete"/></svg>Delete</button>
      <button class="cmd"><svg><use href="#emodify"/></svg>Modify</button>
    </div>
    <div class="col">
      <button class="cmd"><svg><use href="#topo"/></svg>Modify Topo.</button>
      <button class="cmd"><svg><use href="#param"/></svg>Parameters</button>
      <button class="cmd"><svg><use href="#conn"/></svg>Connection</button>
    </div>
    <div class="col">
      <button class="cmd"><svg><use href="#extract"/></svg>Extract</button>
      <button class="cmd"><svg><use href="#edivide"/></svg>Divide</button>
      <button class="cmd"><svg><use href="#measure"/></svg>Measure</button>
    </div>
    <div class="col">
      <button class="cmd"><svg><use href="#iface"/></svg>Interface</button>
      <button class="cmd"><svg><use href="#pile"/></svg>Pile/Pile Tip</button>
      <button class="cmd"><svg><use href="#free"/></svg>Free Field</button>
    </div>
    <div class="col">
      <button class="cmd"><svg><use href="#hinge"/></svg>Hinge<svg class="dd"><use href="#tri"/></svg></button>
      <button class="cmd"><svg><use href="#infinite"/></svg>Infinite</button>
      <button class="cmd"><svg><use href="#seepage"/></svg>Seepage Cut Off</button>
    </div>
    <div class="col"><button class="cmd"><svg><use href="#fluid"/></svg>Fluid Boundary</button></div>
  </div><h2>Element</h2></section>

  <section class="group g-tools"><div class="body">
    <button class="big"><svg><use href="#options"/></svg>Options</button>
    <div class="col">
      <button class="cmd"><svg><use href="#renum"/></svg>Renumber</button>
      <button class="cmd"><svg><use href="#check"/></svg>Check<svg class="dd"><use href="#tri"/></svg></button>
      <button class="cmd"><svg><use href="#table"/></svg>Table<svg class="dd"><use href="#tri"/></svg></button>
    </div>
    <div class="col"><button class="cmd"><svg><use href="#georel"/></svg>Geo. Relation<svg class="dd"><use href="#tri"/></svg></button></div>
  </div><h2>Tools</h2></section>
</div>

<div class="bars">
  <div class="bar first">
    <button class="tb" aria-label="Run"><svg><use href="#run"/></svg></button><i class="sep"></i>
    <button class="tb on" aria-label="Unlock"><svg><use href="#lockopen"/></svg></button>
    <button class="tb" aria-label="Lock"><svg><use href="#lock"/></svg></button>
    <button class="cap" aria-label="More"><svg><use href="#more"/></svg></button>
  </div>
  <div class="bar"><i class="grip"></i>
    <button class="tb" aria-label="Clipping"><svg><use href="#clip"/></svg></button>
    <button class="tb" aria-label="Symmetry"><svg><use href="#sym"/></svg></button>
    <button class="tb" aria-label="Contour"><svg><use href="#contour"/></svg></button>
    <button class="cap" aria-label="More"><svg><use href="#more"/></svg></button>
  </div>
  <div class="bar"><i class="grip"></i>
    <button class="tb" aria-label="Grid"><svg><use href="#gridp"/></svg></button>
    <button class="tb" aria-label="Work plane"><svg><use href="#wplane"/></svg></button>
    <button class="tb" aria-label="Work plane axes"><svg><use href="#axw"/></svg></button>
    <button class="tb on" aria-label="Global axes"><svg><use href="#axg"/></svg></button><i class="sep"></i>
    <button class="tb" aria-label="Move work plane"><svg><use href="#gmove"/></svg></button>
    <button class="tb" aria-label="Edit grid"><svg><use href="#gedit"/></svg></button><i class="sep"></i>
    <button class="tb" aria-label="Snap"><svg><use href="#hash"/></svg></button>
    <button class="cap" aria-label="More"><svg><use href="#more"/></svg></button>
  </div>
  <div class="bar"><i class="grip"></i>
    <button class="tb" aria-label="Layers"><svg><use href="#brick"/></svg></button><i class="sep"></i>
    <button class="tb" aria-label="Element axes"><svg><use href="#info1"/></svg></button>
    <button class="tb" aria-label="Material axes"><svg><use href="#info2"/></svg></button><i class="sep"></i>
    <button class="tb" aria-label="Node number"><svg><use href="#non"/></svg></button>
    <button class="tb" aria-label="Element number"><svg><use href="#eln"/></svg></button><i class="sep"></i>
    <button class="tb" aria-label="Query"><svg><use href="#ask"/></svg></button><i class="sep"></i>
    <button class="tb" aria-label="Network"><svg><use href="#net"/></svg></button>
    <button class="tb" aria-label="Network box"><svg><use href="#netbox"/></svg></button><i class="sep"></i>
    <button class="tb" aria-label="Distance"><svg><use href="#dist"/></svg></button>
    <button class="cap" aria-label="More"><svg><use href="#more"/></svg></button>
  </div>
  <div class="bar end"><i class="grip"></i>
    <button class="tb" aria-label="Zoom all"><svg><use href="#zoom"/></svg></button>
    <button class="tb blue" aria-label="Auto zoom"><svg><use href="#zoom"/></svg></button><i class="sep"></i>
    <button class="tb" aria-label="Zoom window"><svg><use href="#zoomwin"/></svg></button>
    <button class="tb" aria-label="Dynamic zoom"><svg><use href="#zoomdyn"/></svg></button>
    <button class="tb" aria-label="Rotate"><svg><use href="#rot"/></svg></button>
    <button class="tb" aria-label="Rotate about centre"><svg><use href="#rotc"/></svg></button>
    <button class="tb" aria-label="Pan"><svg><use href="#pan"/></svg></button><i class="sep"></i>
    <button class="tb" aria-label="Four views"><svg><use href="#four"/></svg></button>
    <button class="tb" aria-label="Z view"><svg><use href="#axz"/></svg></button>
    <button class="tb" aria-label="Y view"><svg><use href="#axy"/></svg></button><i class="sep"></i>
    <button class="tb" aria-label="Front"><svg><use href="#cfront"/></svg></button>
    <button class="tb" aria-label="Back"><svg><use href="#cback"/></svg></button>
    <button class="tb" aria-label="Top"><svg><use href="#ctop"/></svg></button>
    <button class="tb" aria-label="Bottom"><svg><use href="#cbot"/></svg></button>
    <button class="tb" aria-label="Left"><svg><use href="#cleft"/></svg></button>
    <button class="tb" aria-label="Right"><svg><use href="#cright"/></svg></button><i class="sep"></i>
    <button class="tb" aria-label="Shading"><svg><use href="#iso"/></svg></button><button class="drop" aria-label="Shading options"><svg><use href="#tri"/></svg></button>
    <button class="tb" aria-label="Mesh display"><svg><use href="#isomesh"/></svg></button><button class="drop" aria-label="Mesh options"><svg><use href="#tri"/></svg></button>
    <button class="tb" aria-label="Cut"><svg><use href="#isocut"/></svg></button>
    <button class="tb on" aria-label="Shadow"><svg><use href="#isoshade"/></svg></button>
    <button class="tb" aria-label="Perspective"><svg><use href="#persp"/></svg></button>
    <button class="cap" aria-label="More"><svg><use href="#more"/></svg></button>
  </div>
</div>

<main class="work">
  <aside class="left">
    <div class="panel">
      <div class="phead"><h2>Model</h2><button aria-label="Pin"><svg><use href="#pin"/></svg></button><button aria-label="Close"><svg><use href="#x"/></svg></button></div>
      <table class="tree">
        <thead><tr><th class="c-item">Item</th><th class="c-id">ID</th><th class="c-color">Color</th><th></th></tr></thead>
        <tbody>
        <tr><td><div class="node root"><svg><use href="#compass"/></svg>New Works</div></td><td></td><td></td><td></td></tr>
        <tr><td><div class="node"><button class="exp" aria-label="Expand"><svg><use href="#plus"/></svg></button><svg><use href="#csys"/></svg>Coordinate System</div></td><td></td><td></td><td></td></tr>
        <tr><td><div class="node"><i class="leaf"></i><svg><use href="#triad"/></svg>View Point</div></td><td></td><td></td><td></td></tr>
        <tr><td><div class="node"><button class="exp" aria-label="Expand"><svg><use href="#plus"/></svg></button><svg><use href="#tgrid"/></svg>Work Plane</div></td><td></td><td></td><td></td></tr>
        <tr><td><div class="node"><button class="exp" aria-label="Expand"><svg><use href="#plus"/></svg></button><svg><use href="#triad"/></svg>Datum</div></td><td></td><td></td><td></td></tr>
        <tr><td><div class="node"><button class="exp" aria-label="Expand"><svg><use href="#plus"/></svg></button><svg><use href="#tmat"/></svg>Material</div></td><td></td><td></td><td></td></tr>
        <tr><td><div class="node"><button class="exp" aria-label="Expand"><svg><use href="#plus"/></svg></button><svg><use href="#tprop"/></svg>Property</div></td><td></td><td></td><td></td></tr>
        <tr><td><div class="node"><button class="exp" aria-label="Expand"><svg><use href="#plus"/></svg></button><label><input type="checkbox" checked><svg><use href="#tgeo"/></svg>Geometry</label></div></td><td></td><td></td><td></td></tr>
        <tr><td><div class="node"><i class="leaf"></i><svg><use href="#bed"/></svg>Bedding Plane</div></td><td></td><td></td><td></td></tr>
        <tr><td><div class="node"><i class="leaf"></i><svg><use href="#shape"/></svg>Export Shape</div></td><td></td><td></td><td></td></tr>
        <tr><td><div class="node"><button class="exp" aria-label="Expand"><svg><use href="#plus"/></svg></button><svg><use href="#tctrl"/></svg>Mesh Control</div></td><td></td><td></td><td></td></tr>
        <tr><td><div class="node"><button class="exp" aria-label="Collapse"><svg><use href="#minus"/></svg></button><label><input type="checkbox" checked><svg><use href="#tmesh"/></svg>Mesh</label></div></td><td></td><td></td><td></td></tr>
        <tr><td><div class="node sub"><label><input type="checkbox" checked><svg><use href="#tmesh"/></svg>Default Mesh Set</label></div></td><td>1</td><td><span class="swatch full"></span></td><td></td></tr>
        <tr><td><div class="node sub"><label><input type="checkbox" checked><svg><use href="#tmesh"/></svg>Regenerated Mes.</label></div></td><td>3</td><td><span class="swatch pale"></span></td><td></td></tr>
        <tr><td><div class="node"><button class="exp" aria-label="Expand"><svg><use href="#plus"/></svg></button><svg><use href="#contact"/></svg>Contact</div></td><td></td><td></td><td></td></tr>
        <tr><td><div class="node"><button class="exp" aria-label="Expand"><svg><use href="#plus"/></svg></button><svg><use href="#elpar"/></svg>Element Parameters</div></td><td></td><td></td><td></td></tr>
        <tr><td><div class="node last"><button class="exp" aria-label="Expand"><svg><use href="#plus"/></svg></button><svg><use href="#hinge"/></svg>Hinge</div></td><td></td><td></td><td></td></tr>
        </tbody>
      </table>
    </div>
    <nav class="lefttabs"><button class="on">Model</button><button>Analysis</button><button>Results</button></nav>
  </aside>

  <div class="center">
    <section class="doc">
      <div class="canvas">
        <svg class="rule" width="160" height="44"><path fill="#fff" stroke="#b4b4b4" d="M.5 2.500h129v9H.5z"/><path fill="#b0b0b0" d="M0 2h65v5H0zM65 7h65v5H65z"/><path stroke="#b4b4b4" d="M.5 2v13M65.500 2v13M129.500 2v13"/><text x="133" y="12">m</text><text x="-3" y="33">0</text><text x="54" y="33">20.4</text><text x="117" y="33">40.9</text></svg>
        <div class="picker">
          <button class="tb on" aria-label="Box select"><svg><use href="#pickbox"/></svg></button>
          <button class="tb" aria-label="Polygon select"><svg><use href="#pickpoly"/></svg></button><i class="sep"></i>
          <button class="tb" aria-label="Select by chain"><svg><use href="#pickhex"/></svg></button><button class="drop" aria-label="Chain options"><svg><use href="#tri"/></svg></button><i class="sep"></i>
          <label class="combo basic"><select aria-label="Selection filter"><option>Basic</option></select><svg><use href="#tri"/></svg></label>
          <label class="combo geo"><select aria-label="Geometry filter"><option>All Geometries (</option></select><svg><use href="#tri"/></svg></label><i class="sep"></i>
          <button class="tb" aria-label="Path one"><svg><use href="#pickpath"/></svg></button>
          <button class="tb" aria-label="Path two"><svg><use href="#pickpath"/></svg></button>
          <button class="tb" aria-label="Options"><svg><use href="#pickdim"/></svg></button><i class="sep"></i>
          <button class="tb" aria-label="Intersect"><svg><use href="#isect"/></svg></button>
          <button class="tb" aria-label="Front only"><svg><use href="#front"/></svg></button><i class="sep"></i>
          <button class="tb" aria-label="Pick"><svg><use href="#pickc"/></svg></button>
          <button class="tb" aria-label="No pick"><svg><use href="#nopick"/></svg></button><i class="sep"></i>
          <button class="tb" aria-label="Paint"><svg><use href="#paint"/></svg></button>
        </div>
        <svg class="mesh" viewBox="0 0 1136 443" role="img" aria-label="Mesh, 36 by 14 elements"><defs><pattern id="cells" width="63" height="63" patternUnits="userSpaceOnUse"><path class="cell" d="M0 0V63M31.500 0V63M0 0H63M0 31.500H63M63 0V63M0 63H63"/></pattern></defs><g transform="translate(1 1)"><path fill="#e4e27a" d="M0 0h1134v441H0z"/><path fill="url(#cells)" d="M0 0h1134v441H0z"/><path fill="none" stroke="#4a4a8c" stroke-width="2" d="M0 0h1134v441H0z"/></g></svg>
        <svg class="axes" width="70" height="80"><path stroke="#00e000" stroke-width="4" d="M10 62V36"/><path fill="#00e000" d="M10 22l5 14H5z"/><path stroke="#e00000" stroke-width="5" d="M10 62h30"/><path fill="#e00000" d="M49 62l-10-6v12z"/><circle cx="10" cy="62" r="5" fill="#0000d0"/><text class="ay" x="11" y="14">Y</text><text class="az" x="12" y="59">Z</text><text class="ax" x="57" y="64">X</text></svg>
      </div>
      <div class="doctabs">
        <button class="nav" aria-label="Scroll left"><svg viewBox="0 0 8 12"><path fill="none" stroke="#555" d="M6 1v10L1 6z"/></svg></button>
        <div class="doctab"><svg><use href="#doc"/></svg><span>NXGT1</span><button aria-label="Close tab"><svg><use href="#x"/></svg></button></div>
        <button class="nav end" aria-label="Scroll right"><svg viewBox="0 0 8 12"><path fill="none" stroke="#555" d="M2 1v10l5-5z"/></svg></button>
      </div>
    </section>
    <section class="output">
      <div class="phead"><h2>Output</h2><button aria-label="Pin"><svg><use href="#pin"/></svg></button><button aria-label="Close"><svg><use href="#x"/></svg></button></div>
      <div class="log">
        <ul>
          <li>&gt; Work project is being saved by auto-save function.</li>
          <li>&gt; License has been certified.</li>
          <li>&gt; Your maintenance period expires in 299 day(s).</li>
          <li>&gt; Work project is being saved by auto-save function.</li>
          <li>&gt; Work project is being saved by auto-save function.</li>
          <li>&gt; A mesh set[Regenerated Mesh Set] which has 555 nodes and 504 elements has been created.</li>
        </ul>
        <div class="scroll"><i></i></div>
      </div>
    </section>
  </div>

  <aside class="props">
    <div class="phead"><h2>Properties</h2><button aria-label="Pin"><svg><use href="#pin"/></svg></button><button aria-label="Close"><svg><use href="#x"/></svg></button></div>
    <div class="general"><button class="exp" aria-label="Expand"><svg><use href="#plus"/></svg></button>General</div>
    <div class="sheet"><i></i><i></i></div>
  </aside>

  <div class="tasks">
    <button><i></i>Task Pane</button>
    <button><i></i>Task Pane</button>
  </div>
</main>

<footer class="status">
  <span class="coord">W: -310,043, -74.2942</span>
  <span class="range">X: -160~200 Y: -100~40 Z:0~0</span>
  <span class="count">G:[1] N:[555] E:[504]</span>
  <label class="unit"><select aria-label="Force unit"><option>kN</option></select><svg viewBox="0 0 10 6"><path fill="none" stroke="#555" d="M1 1l4 4 4-4"/></svg></label>
  <label class="unit"><select aria-label="Length unit"><option>m</option></select><svg viewBox="0 0 10 6"><path fill="none" stroke="#555" d="M1 1l4 4 4-4"/></svg></label>
  <label class="unit"><select aria-label="Energy unit"><option>J</option></select><svg viewBox="0 0 10 6"><path fill="none" stroke="#555" d="M1 1l4 4 4-4"/></svg></label>
  <label class="unit"><select aria-label="Time unit"><option>sec</option></select><svg viewBox="0 0 10 6"><path fill="none" stroke="#555" d="M1 1l4 4 4-4"/></svg></label>
</footer>
</body>
</html>
```
FILE: styles.css
```css
* { box-sizing: border-box; }
html, body { height: 100%; }
body {
  margin: 0;
  display: flex;
  flex-direction: column;
  overflow: hidden;
  background: #505050;
  color: #1e1e1e;
  font: 15px/20px "Noto Sans", "Open Sans", sans-serif;
}
button, select { margin: 0; padding: 0; border: 0; background: none; color: inherit; font: inherit; }
h1, h2 { margin: 0; font-size: 15px; line-height: 20px; font-weight: 400; }
svg { display: block; flex: none; overflow: visible; }
.sprite { position: absolute; width: 0; height: 0; visibility: hidden; }

/* icon strokes and fills */
.s { stroke: #3f5f92; stroke-width: 1.6; }
.s:not([fill]) { fill: none; }
.s1 { stroke: #3f5f92; stroke-width: 1; }
.s1:not([fill]) { fill: none; }
.o { stroke: #ee6a1c; stroke-width: 1.8; }
.o:not([fill]) { fill: none; }
.r { stroke: #e0281e; stroke-width: 2; fill: none; }
.g { stroke: #12a042; stroke-width: 2; fill: none; }
.u { stroke: #2222e8; stroke-width: 2; fill: none; }
.k { stroke: #2c3f60; stroke-width: 1.6; }
.k:not([fill]) { fill: none; }
.w3 { stroke-width: 3; }
.w4 { stroke-width: 4; }
.fs { fill: #3f5f92; }
.fo { fill: #f39a1e; }
.fr { fill: #f0541c; }
.fl { fill: #b9cbe4; }
.fk { fill: #2c3f60; }
.cell { fill: none; stroke: #55552c; stroke-width: 1; }
.gt { font: bold 12px "Noto Sans", sans-serif; fill: #2d6b3c; }
.bt { font: bold 9px "Noto Sans", sans-serif; fill: #3b78d0; }
.rt { font: bold 12px "Noto Sans", sans-serif; fill: #e0281e; }
.nt { font: bold 10px "Noto Sans", sans-serif; fill: #28406c; }
.xt { font: bold 12px "Noto Sans", sans-serif; fill: #333; }
.lt { font: bold 17px "Noto Sans", sans-serif; fill: #28406c; }
.qt { font: bold 20px "Noto Sans", sans-serif; fill: #ee6a1c; }
.nx { font: bold 10px "Noto Sans", sans-serif; fill: #f0401c; }

/* title bar */
.titlebar {
  flex: none;
  height: 31px;
  display: flex;
  align-items: center;
  border-top: 1px solid #6a6a6a;
  background: linear-gradient(#2d2d2b, #434343);
  color: #e4e4e4;
}
.app {
  position: relative;
  z-index: 2;
  width: 49px;
  height: 49px;
  margin: 24px 6px 0 1px;
  display: grid;
  place-items: center;
  border-radius: 50%;
  border: 1px solid #888;
  background: radial-gradient(circle at 50% 30%, #fff, #d9d9d9 60%, #a8a8a8);
}
.app svg { width: 30px; height: 30px; }
.quick {
  width: 288px;
  height: 26px;
  display: flex;
  align-items: center;
  padding-left: 5px;
  margin: 0 6px 3px 0;
  border-radius: 0 13px 13px 0;
  border: 1px solid #5c5c5c;
  border-left: 0;
  background: linear-gradient(#464646, #4d4d4d);
}
.quick button { width: 30px; display: grid; place-items: center; }
.quick svg { width: 19px; height: 19px; }
.custom { color: #aaa; margin-bottom: 6px; }
.custom svg { width: 8px; height: 10px; }
.title { flex: 1; text-align: center; padding: 0 12px 5px 0; }
.title span { color: #9db6dc; }
.winctl { display: flex; gap: 37px; padding: 0 10px 8px 0; color: #b9bcc4; }
.winctl svg { width: 12px; height: 12px; }

/* tab row */
.tabrow { flex: none; height: 32px; display: flex; justify-content: space-between; color: #dedede; }
.tabs {
  display: grid;
  grid-template-columns: 111px 75px 188px 262px 165px 160px 96px 81px 76px;
  margin-left: 56px;
  padding-top: 1px;
}
.tabs button { white-space: nowrap; padding-top: 2px; }
.tabs .on {
  margin: 0 1px;
  border-radius: 4px 4px 0 0;
  background: linear-gradient(#f4f4f4, #cfd5dd);
  color: #111;
}
.prefs { display: flex; align-items: center; gap: 8px; padding-top: 6px; }
.prefs button { display: flex; align-items: center; gap: 11px; }
.prefs svg { width: 8px; height: 8px; margin-bottom: 8px; color: #b5b5b5; }
.prefs .help {
  width: 20px;
  height: 20px;
  margin: 0 8px 8px 1px;
  justify-content: center;
  border-radius: 50%;
  background: radial-gradient(circle at 50% 30%, #8fc0ff, #1f53d6);
  border: 2px solid #a9c8f4;
  color: #fff;
  font-weight: 700;
  font-size: 14px;
}
.prefs .mdi { margin-right: 8px; }
.prefs .mdi svg { width: 9px; height: 9px; }
.prefs .mdi:last-child { margin-right: 0; }

/* ribbon */
.ribbon {
  flex: none;
  height: 125px;
  display: flex;
  gap: 4px;
  padding: 3px 3px 2px;
  border-top: 1px solid #f2f2f2;
  border-bottom: 1px solid #f4f4f4;
  background: linear-gradient(#d4d8e0 0 16px, #c1c6d1 17px, #e4edef 97px, #e4edef);
}
.group {
  flex: none;
  display: flex;
  flex-direction: column;
  border: 1px solid #a3a7ae;
  border-radius: 3px;
  overflow: hidden;
  background: linear-gradient(#d0d3dc 0 14px, #b5bac6 15px, #e2e8e8 94px);
}
.group .body { height: 94px; display: grid; padding: 1px 0 3px 8px; }
.group h2 {
  flex: 1;
  text-align: center;
  line-height: 21px;
  color: #f0f0f0;
  background: linear-gradient(#b1b3b3, #999b9b);
}
.g-prop { width: 344px; }
.g-prop .body { grid-template-columns: 63px 62px 127px 1fr; padding-left: 3px; }
.g-control { width: 241px; }
.g-control .body { grid-template-columns: 58px 52px 1fr; padding-left: 3px; }
.g-generate { width: 158px; }
.g-generate .body { grid-template-columns: 56px 1fr; }
.g-meshset { width: 180px; }
.g-meshset .body { grid-template-columns: 93px 1fr; }
.g-protrude { width: 185px; }
.g-protrude .body { grid-template-columns: 90px 1fr; }
.g-transform { width: 173px; }
.g-transform .body { grid-template-columns: 82px 1fr; }
.g-node { width: 176px; }
.g-node .body { grid-template-columns: 82px 1fr; }
.g-element { width: 718px; }
.g-element .body { grid-template-columns: 82px 128px 96px 112px 151px 1fr; }
.g-tools { width: 315px; }
.g-tools .body { grid-template-columns: 58px 112px 1fr; padding-left: 3px; }
.big { display: flex; flex-direction: column; align-items: center; padding-top: 4px; line-height: 14px; white-space: nowrap; }
.big svg { width: 44px; height: 44px; margin-bottom: 6px; }
.col { display: flex; flex-direction: column; justify-content: center; }
.big + .col { padding-left: 6px; }
.col.two { gap: 9px; }
.cmd { height: 30px; display: flex; align-items: center; gap: 4px; white-space: nowrap; }
.cmd svg { width: 22px; height: 22px; }
.cmd .dd { width: 8px; height: 8px; margin: 0 0 6px 2px; color: #555; }

/* docked tool bars */
.bars { flex: none; height: 38px; display: flex; align-items: flex-start; padding-top: 3px; border-top: 1px solid #3c3c3c; }
.bar {
  height: 33px;
  display: flex;
  align-items: center;
  background: linear-gradient(#cdd0d7, #979da8);
}
.bar.first { padding-left: 8px; }
.bar.end, .bar.end .cap { border-radius: 0 4px 4px 0; }
.tb { width: 30px; height: 29px; display: grid; place-items: center; flex: none; }
.bar .tb svg { background: #e9ebef; }
.tb svg { width: 22px; height: 22px; }
.bar .tb.on, .picker .tb.on {
  border: 1px solid #e0a850;
  border-radius: 2px;
  background: linear-gradient(#fde6bd, #fff3c4);
}
.bar .tb.on svg { background: none; }
.bar .tb.blue svg { background: #8fabd2; }
.sep { flex: none; width: 11px; height: 20px; background: linear-gradient(#8a8f98, #8a8f98) 50% 0 / 1px 100% no-repeat; }
.grip { flex: none; width: 10px; height: 17px; background: repeating-linear-gradient(#555 0 2px, transparent 2px 5px) 50% 0 / 2px 100% no-repeat; }
.cap {
  width: 13px;
  height: 33px;
  margin-left: 3px;
  display: grid;
  place-items: end center;
  padding-bottom: 3px;
  background: linear-gradient(#8c929d, #555a63);
  color: #fff;
}
.cap svg { width: 8px; height: 9px; }
.drop { width: 17px; display: grid; place-items: center; color: #555; }
.drop svg { width: 9px; height: 9px; }

/* work area */
.work { flex: 1; min-height: 0; display: grid; grid-template-columns: 355px minmax(0, 1fr) 260px 18px; }
.phead {
  flex: none;
  height: 28px;
  display: flex;
  align-items: center;
  gap: 14px;
  padding: 0 8px 2px 4px;
  border-top: 1px solid #cfcfcf;
  background: linear-gradient(#9b9e9d, #b2b6b6);
  color: #4c4c4c;
}
.phead h2 { flex: 1; }
.phead svg { width: 11px; height: 13px; }
.phead button:last-child svg { height: 11px; }
.left { display: flex; flex-direction: column; min-height: 0; }
.left .phead { padding-left: 0; }
.panel { flex: 1; background: #fff; border-right: 1px solid #ccc; border-bottom: 1px solid #bbb; }
.lefttabs { flex: none; height: 29px; display: flex; align-items: flex-start; color: #e0e0e0; padding-left: 2px; }
.lefttabs button { height: 26px; padding: 0 4px; margin-right: 6px; }
.lefttabs .on { background: linear-gradient(#d5dae1, #fff); color: #222; border-radius: 0 0 3px 3px; }

.tree { width: 100%; height: 427px; border-collapse: collapse; table-layout: fixed; }
.tree th { height: 27px; padding: 0 0 0 5px; text-align: left; font-weight: 400; border-right: 1px solid #e4e4e4; }
.tree th:last-child { border: 0; }
.tree .c-item { width: 232px; padding-left: 4px; }
.tree .c-id { width: 52px; }
.tree .c-color { width: 60px; }
.tree td { padding: 0; white-space: nowrap; line-height: 20px; }
.tree td + td { padding-left: 1px; }
.tree td + td + td { padding-left: 4px; }
.node {
  position: relative;
  display: flex;
  align-items: center;
  height: 100%;
  padding-left: 7px;
}
.node svg, .node label svg { width: 21px; height: 21px; margin-right: 5px; }
.node::before {
  content: "";
  position: absolute;
  left: 13px;
  top: -3px;
  bottom: -3px;
  width: 1px;
  background: repeating-linear-gradient(#aaa 0 1px, transparent 1px 3px);
}
.node.root { padding-left: 2px; }
.node.root::before { top: 20px; }
.node.last::before { bottom: 10px; }
.exp, .leaf { position: relative; width: 20px; height: 12px; background: repeating-linear-gradient(90deg, #aaa 0 1px, transparent 1px 3px) 6px 6px / 13px 1px no-repeat; }
.exp svg, .node .exp svg { width: 12px; height: 12px; margin: 0; }
.node label { display: flex; align-items: center; padding-left: 3px; }
.node.sub label { padding-left: 48px; }
.node.sub::after {
  content: "";
  position: absolute;
  left: 38px;
  top: -12px;
  bottom: 10px;
  width: 14px;
  border: 1px dotted #aaa;
  border-width: 0 0 1px 1px;
}
input[type="checkbox"] {
  appearance: none;
  position: relative;
  width: 15px;
  height: 15px;
  margin: 0 3px 0 0;
  border: 2px solid #777;
  border-right-color: #d4d4d4;
  border-bottom-color: #d4d4d4;
  background: #fff;
}
input[type="checkbox"]:checked::after {
  content: "";
  position: absolute;
  left: 3px;
  top: 0;
  width: 5px;
  height: 9px;
  border: solid #000;
  border-width: 0 2px 2px 0;
  transform: rotate(40deg);
}
.swatch { display: block; width: 54px; height: 18px; border: 1px solid #222; }
.swatch.full { background: #ffff00; }
.swatch.pale { background: #ffff80; }

.center { display: flex; flex-direction: column; min-height: 0; padding: 0 7px 0 8px; }
.doc { flex: 1; min-height: 0; display: flex; flex-direction: column; background: #fff; margin-bottom: 6px; }
.canvas {
  flex: 1;
  position: relative;
  margin: 4px 3px 3px 3px;
  border: 1px solid #777;
  border-right-color: #eee;
  border-bottom-color: #eee;
  overflow: hidden;
}
.rule { position: absolute; left: 21px; top: 8px; }
.rule text { font: 15px "Noto Sans", sans-serif; fill: #b4b4b4; }
.mesh { position: absolute; left: 480px; top: 228px; width: 1136px; height: 443px; }
.axes { position: absolute; right: 17px; bottom: 34px; }
.axes text { font: 14px "Liberation Sans", sans-serif; }
.axes .ay { fill: #50f050; }
.axes .ax { fill: #f04040; }
.axes .az { fill: #4040e0; font-size: 10px; }
.picker { position: absolute; left: 606px; top: 11px; display: flex; align-items: center; height: 30px; }
.combo { position: relative; display: block; font-size: 14px; }
.combo select { appearance: none; width: 100%; height: 26px; padding-left: 2px; outline: 0; }
.combo svg {
  position: absolute;
  right: 0;
  top: 0;
  width: 20px;
  height: 26px;
  padding: 0 6px 2px;
  background: linear-gradient(#a5adb8, #b8bec6);
  color: #444;
  pointer-events: none;
}
.combo.basic { width: 131px; margin: 0 9px 0 6px; }
.combo.geo { width: 131px; margin-right: 4px; }

.doctabs { flex: none; height: 30px; display: flex; align-items: flex-start; background: linear-gradient(#c9ccd4, #969ca8); border-top: 1px solid #a9adb4; }
.nav { width: 22px; height: 29px; display: grid; place-items: center; }
.nav svg { width: 9px; height: 12px; }
.nav.end { margin: 0 6px 0 auto; }
.doctab {
  height: 26px;
  display: flex;
  align-items: center;
  padding: 0 8px 0 36px;
  background: #fff;
  clip-path: polygon(0 0, 100% 0, 100% 100%, 25px 100%);
  font-weight: 700;
  font-size: 14px;
}
.doctab svg { width: 21px; height: 21px; margin-right: 14px; }
.doctab button svg { width: 10px; height: 10px; margin: 0 0 0 15px; color: #666; }

.output { flex: none; height: 210px; display: flex; flex-direction: column; background: #fff; }
.log { flex: 1; min-height: 0; display: flex; overflow: hidden; }
.log ul { flex: 1; list-style: none; margin: -3px 0 0; padding: 0 0 0 4px; line-height: 27px; color: #333; }
.scroll { width: 20px; background: #f0f0f0; padding: 57px 0 22px 9px; }
.scroll i { display: block; width: 3px; height: 100%; background: #8a8a8a; }

.props { display: flex; flex-direction: column; min-height: 0; border-left: 1px solid #ccc; }
.props .phead { height: 27px; }
.general { flex: none; height: 25px; display: flex; align-items: center; gap: 4px; padding: 0 0 2px 6px; background: #eaeaea; color: #888; font-weight: 700; }
.props .exp { background: none; }
.sheet { flex: 1; display: grid; grid-template-columns: 130px 1fr; background: #fff; }
.sheet i + i { border-left: 1px solid #eee; }

.tasks { display: flex; flex-direction: column; gap: 15px; padding: 4px 0 0 3px; overflow: hidden; }
.tasks button {
  height: 136px;
  width: 28px;
  display: flex;
  align-items: center;
  gap: 14px;
  padding-top: 6px;
  background: #fbe29a;
  writing-mode: vertical-rl;
  color: #7c7460;
  white-space: nowrap;
}
.tasks i { width: 14px; height: 14px; border-radius: 50%; background: radial-gradient(circle at 40% 40%, #e8ffd8, #5cb84c); margin-right: 4px; }

/* status bar */
.status {
  flex: none;
  height: 17px;
  display: flex;
  align-items: flex-start;
  overflow: hidden;
  background: linear-gradient(#424652 0, #3a3e48 8px, #2b2b2b 9px);
  color: #ddd;
  font-size: 14px;
}
.status span { border-left: 1px solid #5a5e68; padding: 4px 0 0 3px; white-space: nowrap; flex: none; }
.coord { width: 221px; margin-left: auto; }
.range { width: 361px; }
.count { width: 254px; }
.unit { position: relative; flex: none; width: 52px; margin: 3px 3px 0 0; background: #fff; color: #222; }
.unit:last-child { margin-right: 12px; }
.unit select { appearance: none; width: 100%; height: 24px; padding: 2px 0 0 4px; outline: 0; }
.unit svg { position: absolute; right: 6px; top: 9px; width: 10px; height: 6px; }
```
